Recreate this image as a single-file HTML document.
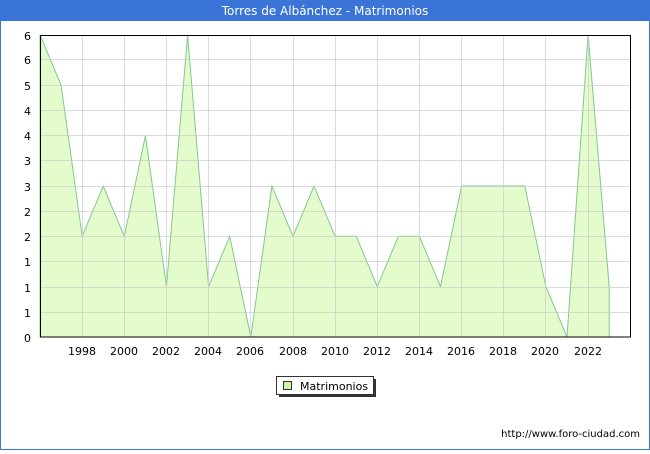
<!DOCTYPE html>
<html><head><style>
body{margin:0;width:650px;height:450px;overflow:hidden;background:#fff;font-family:"DejaVu Sans","Liberation Sans",sans-serif;}
</style></head><body>
<svg width="650" height="450" xmlns="http://www.w3.org/2000/svg" font-family="DejaVu Sans, Liberation Sans, sans-serif">
<rect x="0.5" y="0.5" width="649" height="449" fill="#fff" stroke="#3a74d6" stroke-width="1"/>
<rect x="0" y="0" width="650" height="21" fill="#3a74d6"/>
<text x="325" y="15" fill="#fff" font-size="12" text-anchor="middle">Torres de Albánchez - Matrimonios</text>
<polygon fill="#e4fccc" stroke="#80c890" stroke-width="1" points="40,337 40,35 61.1,85.3 82.2,236.3 103.2,186 124.3,236.3 145.4,135.7 166.5,286.7 187.6,35 208.6,286.7 229.7,236.3 250.8,337 271.9,186 293,236.3 314,186 335.1,236.3 356.2,236.3 377.3,286.7 398.4,236.3 419.4,236.3 440.5,286.7 461.6,186 482.7,186 503.8,186 524.8,186 545.9,286.7 567,337 588.1,35 609.2,286.7 609.2,337"/>
<g stroke="#cccccc" stroke-opacity="0.7" stroke-width="1">
<line x1="40" y1="59.5" x2="631" y2="59.5"/><line x1="40" y1="85.5" x2="631" y2="85.5"/><line x1="40" y1="110.5" x2="631" y2="110.5"/><line x1="40" y1="135.5" x2="631" y2="135.5"/><line x1="40" y1="160.5" x2="631" y2="160.5"/><line x1="40" y1="186.5" x2="631" y2="186.5"/><line x1="40" y1="211.5" x2="631" y2="211.5"/><line x1="40" y1="236.5" x2="631" y2="236.5"/><line x1="40" y1="261.5" x2="631" y2="261.5"/><line x1="40" y1="287.5" x2="631" y2="287.5"/><line x1="40" y1="312.5" x2="631" y2="312.5"/>
<line x1="82.5" y1="35" x2="82.5" y2="337"/><line x1="124.5" y1="35" x2="124.5" y2="337"/><line x1="166.5" y1="35" x2="166.5" y2="337"/><line x1="208.5" y1="35" x2="208.5" y2="337"/><line x1="250.5" y1="35" x2="250.5" y2="337"/><line x1="293.5" y1="35" x2="293.5" y2="337"/><line x1="335.5" y1="35" x2="335.5" y2="337"/><line x1="377.5" y1="35" x2="377.5" y2="337"/><line x1="419.5" y1="35" x2="419.5" y2="337"/><line x1="461.5" y1="35" x2="461.5" y2="337"/><line x1="503.5" y1="35" x2="503.5" y2="337"/><line x1="545.5" y1="35" x2="545.5" y2="337"/><line x1="588.5" y1="35" x2="588.5" y2="337"/>
</g>
<rect x="40.5" y="35.5" width="590" height="301.5" fill="none" stroke="#000" stroke-width="1"/>
<g font-size="11" fill="#000" text-anchor="end">
<text x="31" y="40">6</text><text x="31" y="64">6</text><text x="31" y="90">5</text><text x="31" y="115">4</text><text x="31" y="140">4</text><text x="31" y="165">3</text><text x="31" y="191">3</text><text x="31" y="216">2</text><text x="31" y="241">2</text><text x="31" y="266">1</text><text x="31" y="292">1</text><text x="31" y="317">1</text><text x="31" y="342">0</text>
</g>
<g font-size="11" fill="#000" text-anchor="middle">
<text x="82" y="355">1998</text><text x="124" y="355">2000</text><text x="166" y="355">2002</text><text x="208" y="355">2004</text><text x="250" y="355">2006</text><text x="293" y="355">2008</text><text x="335" y="355">2010</text><text x="377" y="355">2012</text><text x="419" y="355">2014</text><text x="461" y="355">2016</text><text x="503" y="355">2018</text><text x="545" y="355">2020</text><text x="588" y="355">2022</text>
</g>
<rect x="279" y="379" width="97" height="18" fill="#333"/>
<rect x="276.5" y="376.5" width="97" height="18" fill="#fff" stroke="#333"/>
<rect x="283.5" y="381.5" width="8" height="8" fill="#ccf5a8" stroke="#333"/>
<text x="300" y="390" font-size="11" fill="#000">Matrimonios</text>
<text x="640" y="437" font-size="10" fill="#000" text-anchor="end">http://www.foro-ciudad.com</text>
</svg>
</body></html>
